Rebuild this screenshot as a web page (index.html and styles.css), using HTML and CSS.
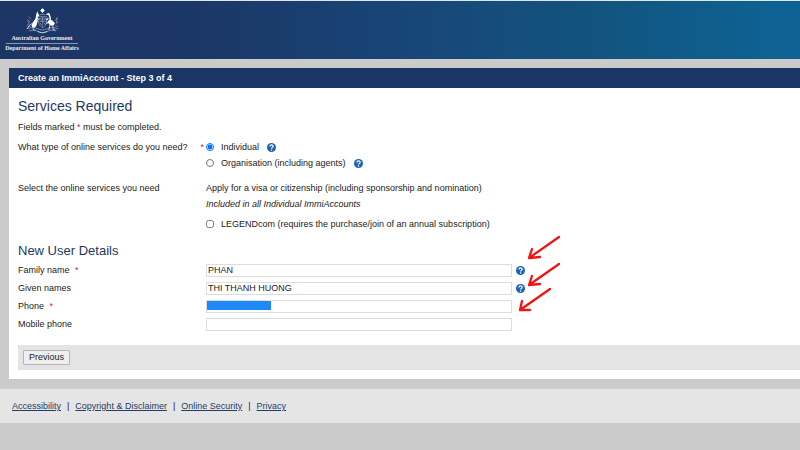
FILE: index.html
```html
<!DOCTYPE html>
<html lang="en">
<head>
    <meta charset="UTF-8">
    <meta name="viewport" content="width=device-width, initial-scale=1.0">
    <title>Create an ImmiAccount</title>
    <link rel="stylesheet" href="styles.css">
</head>
<body>
    <svg width="0" height="0" class="sprite" aria-hidden="true">
        <symbol id="help-icon" viewBox="0 0 18 18">
            <circle cx="9" cy="9" r="9" fill="#1c62b5"/>
            <path d="M5.8 7 C5.8 2.8 12.4 2.9 12.3 6.8 C12.2 8.9 9.2 8.8 9.1 11" fill="none" stroke="#fff" stroke-width="2.4"/>
            <circle cx="9.1" cy="13.8" r="1.5" fill="#fff"/>
        </symbol>
    </svg>

    <header class="banner">
        <div class="brand">
            <svg class="crest" viewBox="0 0 96 75" aria-hidden="true">
                <g fill="none" stroke="#fff" stroke-linecap="round" stroke-linejoin="round">
                    <path d="M48 2 V12 M43 7 H53 M45 4 L51 10 M51 4 L45 10" stroke-width="3"/>
                    <path d="M41 18 H55" stroke-width="2" opacity=".6"/>
                    <path d="M36 24 H60 V42 Q59 53 48 57 Q37 53 36 42 Z M36 39 H60 M44 24 V39 M52 24 V39 M48 39 V56" stroke-width="1.4" opacity=".6"/>
                    <path d="M40 29 V34 M48 28 V35 M56 29 V34 M41 44 L45 49 M53 44 L56 48" stroke-width="2" opacity=".7"/>
                    <path d="M32 29 L36 32 M64 30 L60 34 M60 44 L66 41" stroke-width="3"/>
                    <path d="M17 45 Q7 49 4 59 M21 58 Q17 65 27 64" stroke-width="2.5" opacity=".8"/>
                    <path d="M69 49 L67 63 M78 49 L79 63 H84" stroke-width="2.5" opacity=".8"/>
                    <path d="M69 40 Q73 28 66 16 L61 18" stroke-width="4"/>
                    <path d="M3 60 Q22 53 34 60 Q48 68 62 60 Q75 53 93 60 M10 66 Q22 61 34 67 M62 67 Q76 61 87 66" stroke-width="2" opacity=".6"/>
                    <path d="M12 40 L5 34 L9 46 L3 50 M14 32 L8 25 M86 36 L91 27 L88 44 L94 41 M13 53 L7 54 M86 51 L92 54" stroke-width="2" opacity=".5"/>
                    <path d="M35 68 Q48 75 61 68" stroke-width="3" opacity=".7"/>
                </g>
                <path d="M30 17 L33 9 L36 17 L39 21 L35 25 L33 28 L34 38 L30 52 L24 57 L18 56 L16 50 L20 41 L27 32 L29 24 Z" fill="#fff"/>
                <path d="M63 38 Q74 27 84 44 Q83 51 73 51 Q65 48 63 38 Z" fill="#fff"/>
            </svg>
            <span class="brand-gov">Australian Government</span>
            <span class="brand-dept">Department of Home Affairs</span>
        </div>
    </header>

    <main class="panel">
        <h1>Create an ImmiAccount - Step 3 of 4</h1>
        <form class="content">
            <h2>Services Required</h2>
            <p class="note">Fields marked <span class="required">*</span> must be completed.</p>

            <div class="row" role="radiogroup" aria-labelledby="serviceType">
                <div class="question"><span id="serviceType">What type of online services do you need?</span> <span class="required">*</span></div>
                <div class="options">
                    <div class="option">
                        <input type="radio" id="individual" name="service" checked>
                        <label for="individual">Individual</label>
                        <svg class="help" role="img" aria-label="Help"><use href="#help-icon"/></svg>
                    </div>
                    <div class="option">
                        <input type="radio" id="organisation" name="service">
                        <label for="organisation">Organisation (including agents)</label>
                        <svg class="help" role="img" aria-label="Help"><use href="#help-icon"/></svg>
                    </div>
                </div>
            </div>

            <div class="row services">
                <div>Select the online services you need</div>
                <div class="options">
                    <div>Apply for a visa or citizenship (including sponsorship and nomination)</div>
                    <div><em>Included in all Individual ImmiAccounts</em></div>
                    <div class="option legend">
                        <input type="checkbox" id="legendcom">
                        <label for="legendcom">LEGENDcom (requires the purchase/join of an annual subscription)</label>
                    </div>
                </div>
            </div>

            <h2 class="details-title">New User Details</h2>
            <div class="details">
                <div class="row">
                    <label for="familyName">Family name <span class="required">*</span></label>
                    <div class="field">
                        <input type="text" id="familyName" value="PHAN">
                        <svg class="help" role="img" aria-label="Help"><use href="#help-icon"/></svg>
                    </div>
                </div>
                <div class="row">
                    <label for="givenNames">Given names</label>
                    <div class="field">
                        <input type="text" id="givenNames" value="THI THANH HUONG">
                        <svg class="help" role="img" aria-label="Help"><use href="#help-icon"/></svg>
                    </div>
                </div>
                <div class="row">
                    <label for="phone">Phone <span class="required">*</span></label>
                    <div class="field">
                        <input type="text" id="phone">
                        <span class="mask"></span>
                    </div>
                </div>
                <div class="row">
                    <label for="mobile">Mobile phone</label>
                    <div class="field">
                        <input type="text" id="mobile">
                    </div>
                </div>
                <svg class="arrows" viewBox="0 0 46 80" aria-hidden="true">
                    <g fill="none" stroke="#f01414" stroke-width="2.3" stroke-linecap="round" stroke-linejoin="round">
                        <path d="M41 3 L11 24 M14 15 L11 24 L22 23"/>
                        <path d="M41 30 L11 51 M14 42 L11 51 L22 50"/>
                        <path d="M32 55 L2 76 M4 67 L2 76 L12 76"/>
                    </g>
                </svg>
            </div>

            <div class="actions">
                <button type="button">Previous</button>
            </div>
        </form>
    </main>

    <footer>
        <a href="#">Accessibility</a>
        <span>|</span>
        <a href="#">Copyright &amp; Disclaimer</a>
        <span>|</span>
        <a href="#">Online Security</a>
        <span>|</span>
        <a href="#">Privacy</a>
    </footer>
</body>
</html>
```
FILE: styles.css
```css
* {
    box-sizing: border-box;
}
body {
    margin: 0;
    background-color: #cbcbcb;
    color: #222;
    font-family: "Liberation Sans", Arial, sans-serif;
    font-size: 9px;
    line-height: 16px;
}
.sprite {
    display: block;
}
.banner {
    padding: 7px 6px 6px;
    border-top: 1px solid #dfe7ee;
    background: linear-gradient(to right, #1c3565 0%, #1b3767 25%, #184577 50%, #12547f 75%, #0e6293 97%);
}
.brand {
    display: flex;
    flex-direction: column;
    align-items: center;
    width: 72px;
    color: #e8edf4;
    font-family: "Liberation Serif", "Times New Roman", serif;
    font-size: 6px;
    font-weight: bold;
    line-height: 8px;
    white-space: nowrap;
}
.crest {
    width: 33px;
    height: 26px;
}
.brand-gov {
    width: 100%;
    padding-bottom: 1px;
    border-bottom: 1px solid #8797b2;
    text-align: center;
}
.brand-dept {
    line-height: 9px;
}
.panel {
    margin: 9px 0 10px 9px;
    background-color: #fff;
}
h1 {
    margin: 0;
    padding: 0 9px;
    background-color: #1b3565;
    color: #fff;
    font-size: 9px;
    line-height: 20px;
}
.content {
    padding: 9px 0 9px 9px;
}
h2 {
    margin: 0;
    color: #22395f;
    font-size: 14px;
    font-weight: normal;
    line-height: 18px;
}
.note {
    margin: 4px 0;
}
.required {
    color: #d22;
}
.row {
    display: grid;
    grid-template-columns: 188px 1fr;
}
.question {
    display: flex;
    justify-content: space-between;
    padding-right: 2px;
}
.option {
    display: flex;
    align-items: center;
}
.option input {
    width: 8px;
    height: 8px;
    margin: 0 7px 0 0;
}
.help {
    width: 9px;
    height: 9px;
    margin-left: 8px;
}
.services {
    margin-top: 9px;
}
.legend {
    margin-top: 4px;
}
.details-title {
    margin-top: 10px;
    font-size: 13px;
}
.details {
    display: grid;
    gap: 5px;
    position: relative;
    margin-top: 4px;
    line-height: 13px;
}
.details .required {
    margin-left: 3px;
}
.field {
    display: flex;
    align-items: center;
    position: relative;
}
.field input {
    width: 306px;
    height: 13px;
    padding: 0 1px;
    border: 1px solid #ddd;
    color: #222;
    font: inherit;
}
.field .help {
    margin-left: 4px;
}
.mask {
    position: absolute;
    top: 1px;
    left: 1px;
    width: 64px;
    height: 9px;
    background-color: #1e88f7;
}
.arrows {
    position: absolute;
    top: -30px;
    left: 500px;
    width: 46px;
    height: 80px;
}
.actions {
    margin-top: 14px;
    padding: 5px;
    background-color: #e4e4e4;
}
button {
    display: block;
    height: 15px;
    padding: 0 5px;
    border: 1px solid #b5b5b5;
    border-radius: 1px;
    background-color: #efefef;
    color: #222;
    font: inherit;
    line-height: 13px;
}
footer {
    display: flex;
    gap: 6px;
    padding: 9px 12px;
    background-color: #e5e5e5;
}
footer a {
    color: #253c66;
}
```
